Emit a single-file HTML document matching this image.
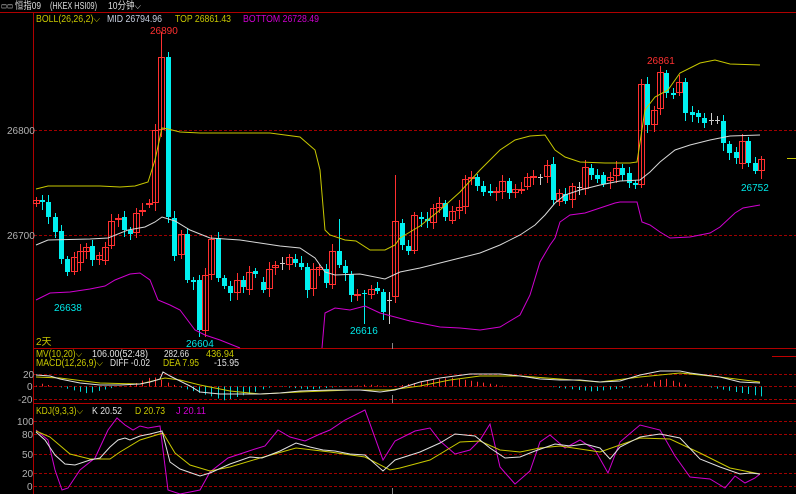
<!DOCTYPE html>
<html><head><meta charset="utf-8"><style>
body{margin:0;background:#000;width:796px;height:494px;overflow:hidden;font-family:"Liberation Sans","Noto Sans CJK SC",sans-serif}
svg{display:block}
text{font-family:"Liberation Sans","Noto Sans CJK SC",sans-serif;font-size:10px}
</style></head><body>
<svg id="s" width="796" height="494" viewBox="0 0 796 494" xmlns="http://www.w3.org/2000/svg">
<rect width="796" height="494" fill="#000"/>
<line x1="0" y1="12.5" x2="796" y2="12.5" stroke="#b00000"/>
<line x1="33.5" y1="13" x2="33.5" y2="494" stroke="#b00000"/>
<line x1="33" y1="348.5" x2="796" y2="348.5" stroke="#b00000"/>
<line x1="33" y1="403.5" x2="796" y2="403.5" stroke="#b00000"/>
<line x1="772" y1="356.5" x2="796" y2="356.5" stroke="#c00000"/>
<line x1="787" y1="158.5" x2="796" y2="158.5" stroke="#c8c800"/>
<line x1="392.5" y1="343" x2="392.5" y2="349" stroke="#888"/>
<line x1="392.5" y1="395" x2="392.5" y2="403" stroke="#888"/>
<line x1="392.5" y1="488" x2="392.5" y2="494" stroke="#888"/>
<g stroke="#a00000" stroke-dasharray="3,2">
<line x1="34" y1="130.5" x2="796" y2="130.5"/><line x1="34" y1="235.5" x2="796" y2="235.5"/>
<line x1="34" y1="374.5" x2="796" y2="374.5"/><line x1="34" y1="386.5" x2="796" y2="386.5"/><line x1="34" y1="399.5" x2="796" y2="399.5"/>
<line x1="34" y1="421.5" x2="796" y2="421.5"/><line x1="34" y1="434.5" x2="796" y2="434.5"/><line x1="34" y1="454.5" x2="796" y2="454.5"/><line x1="34" y1="473.5" x2="796" y2="473.5"/><line x1="34" y1="486.5" x2="796" y2="486.5"/>
</g>
<g id="cand"></g>
<g fill="none" stroke-width="1">
<polyline stroke="#c8c800" points="36,189 48,186 100,186 120,187 135,186 148,182 155,160 162,128 168,129 180,132 200,133 230,133 270,133 300,137 315,150 320,170 325,230 330,235 345,240 356,241 370,250 385,250 395,245 400,238 410,232 420,226 440,210 460,192 480,170 500,150 515,140 530,136 545,135 555,150 565,157 580,162 605,163 630,163 637,162 645,110 655,97 668,90 680,73 700,63 715,60 730,64 760,65"/>
<polyline stroke="#d8d8d8" points="36,245 48,240 90,239 108,238 128,230 145,227 155,222 162,217 175,221 190,230 210,238 240,240 260,243 280,246 300,248 315,258 325,272 335,275 360,274 385,279 400,272 420,268 440,263 460,258 480,253 500,245 520,235 535,225 545,215 555,203 565,195 580,190 600,185 620,181 640,180 650,172 660,162 675,150 690,145 710,140 730,136 760,135"/>
<polyline stroke="#d000d0" points="36,300 50,293 70,292 90,289 105,286 115,280 130,274 140,273 150,280 158,300 170,305 180,310 195,330 205,335 220,340 240,348"/>
<polyline stroke="#d000d0" points="322,348 325,313 335,308 350,310 365,306 380,313 395,317 410,321 420,323 440,327 460,328 480,330 500,327 505,324 520,315 530,295 540,262 550,245 555,238 560,222 570,215 585,213 600,208 615,203 620,202 637,202 642,222 650,225 660,232 670,238 690,237 710,233 720,227 735,213 743,208 760,205"/>
</g>
<g id="hist"></g>
<g fill="none">
<polyline stroke="#c8c800" points="36,377 60,378 100,383 140,384 165,378 180,380 200,385 230,391 260,394 300,392 350,390 390,390 420,386 450,380 480,376 520,376 560,379 600,382 640,377 680,373 720,377 760,382"/>
<polyline stroke="#e0e0e0" points="36,375 50,376 60,379 80,383 100,385 120,385 140,384 150,382 160,379 163,372 170,376 180,381 190,386 200,392 220,394 240,394 260,394 280,393 300,391 330,390 360,390 380,392 395,390 420,382 440,378 470,374 500,374 520,376 540,379 560,380 580,380 600,382 620,381 640,375 660,371 680,371 690,373 720,377 740,382 760,383"/>
<polyline stroke="#d000d0" points="36,430 48,440 55,470 62,490 68,488 80,470 95,458 108,430 117,418 125,425 133,430 140,426 148,428 160,426 168,490 180,494 200,490 210,472 228,458 240,454 255,449 265,446 278,430 290,437 305,441 320,434 330,430 345,420 365,410 383,460 395,441 415,431 430,428 440,441 455,454 470,450 480,440 490,424 500,467 515,484 530,471 540,442 550,435 565,448 580,440 595,450 608,473 620,442 640,425 660,430 675,456 690,477 710,479 725,488 735,476 745,483 755,478 760,474"/>
<polyline stroke="#c8c800" points="36,431 50,437 70,454 90,459 110,459 120,452 140,440 163,433 175,453 190,465 210,471 230,467 260,458 296,448 330,452 365,457 390,470 400,468 430,460 460,442 480,441 500,450 520,452 540,448 560,446 580,449 600,452 620,445 640,438 670,439 700,453 730,468 760,474"/>
<polyline stroke="#e0e0e0" points="36,432 45,440 55,455 65,464 75,465 90,460 100,458 110,447 118,440 125,438 130,440 140,436 150,434 162,431 170,462 180,469 200,476 210,473 230,464 250,457 262,458 280,451 296,443 310,447 323,450 335,451 350,454 365,455 383,471 395,460 420,452 440,443 455,434 475,436 490,448 505,458 520,457 535,451 555,444 570,446 585,444 600,448 610,459 620,447 640,437 660,434 680,438 700,459 720,467 740,474 750,473 760,474"/>
</g>
<text x="1" y="9" fill="#ddd" font-size="8" textLength="12" lengthAdjust="spacingAndGlyphs">▭▭</text>
<text x="15" y="9" fill="#ddd" textLength="26" lengthAdjust="spacingAndGlyphs">恒指09</text>
<text x="50" y="9" fill="#ddd" font-size="9" textLength="47" lengthAdjust="spacingAndGlyphs">(HKEX HSI09)</text>
<text x="108" y="9" fill="#ddd" textLength="33" lengthAdjust="spacingAndGlyphs">10分钟⌵</text>
<text x="36" y="22" fill="#c8c800" textLength="64" lengthAdjust="spacingAndGlyphs">BOLL(26,26,2)⌵</text>
<text x="107" y="22" fill="#c8d0e0" textLength="55" lengthAdjust="spacingAndGlyphs">MID 26794.96</text>
<text x="175" y="22" fill="#c8c800" textLength="56" lengthAdjust="spacingAndGlyphs">TOP 26861.43</text>
<text x="243" y="22" fill="#d000d0" textLength="76" lengthAdjust="spacingAndGlyphs">BOTTOM 26728.49</text>
<text x="150" y="34" fill="#ff3030">26890</text>
<text x="7" y="134" fill="#b0b0b0">26800</text>
<text x="7" y="239" fill="#b0b0b0">26700</text>
<text x="54" y="311" fill="#00e8e8">26638</text>
<text x="186" y="347" fill="#00e8e8">26604</text>
<text x="350" y="334" fill="#00e8e8">26616</text>
<text x="647" y="64" fill="#ff3030">26861</text>
<text x="741" y="191" fill="#00e8e8">26752</text>
<text x="36" y="345" fill="#c8c800">2天</text>
<text x="36" y="357" fill="#c8c800" textLength="46" lengthAdjust="spacingAndGlyphs">MV(10,20)⌵</text>
<text x="92" y="357" fill="#e0e0e0" textLength="56" lengthAdjust="spacingAndGlyphs">106.00(52:48)</text>
<text x="164" y="357" fill="#e0e0e0" textLength="25" lengthAdjust="spacingAndGlyphs">282.66</text>
<text x="206" y="357" fill="#c8c800" textLength="28" lengthAdjust="spacingAndGlyphs">436.94</text>
<text x="36" y="366" fill="#c8c800" textLength="67" lengthAdjust="spacingAndGlyphs">MACD(12,26,9)⌵</text>
<text x="110" y="366" fill="#e0e0e0" textLength="40" lengthAdjust="spacingAndGlyphs">DIFF -0.02</text>
<text x="163" y="366" fill="#c8c800" textLength="36" lengthAdjust="spacingAndGlyphs">DEA 7.95</text>
<text x="214" y="366" fill="#e0e0e0" textLength="25" lengthAdjust="spacingAndGlyphs">-15.95</text>
<text x="23" y="378" fill="#b0b0b0">20</text>
<text x="27" y="390" fill="#b0b0b0">0</text>
<text x="18" y="403" fill="#b0b0b0">-20</text>
<text x="36" y="414" fill="#c8c800" textLength="47" lengthAdjust="spacingAndGlyphs">KDJ(9,3,3)⌵</text>
<text x="92" y="414" fill="#e0e0e0" textLength="30" lengthAdjust="spacingAndGlyphs">K 20.52</text>
<text x="135" y="414" fill="#c8c800" textLength="30" lengthAdjust="spacingAndGlyphs">D 20.73</text>
<text x="176" y="414" fill="#d000d0" textLength="30" lengthAdjust="spacingAndGlyphs">J 20.11</text>
<text x="17" y="425" fill="#b0b0b0">100</text>
<text x="22" y="438" fill="#b0b0b0">80</text>
<text x="22" y="458" fill="#b0b0b0">50</text>
<text x="22" y="477" fill="#b0b0b0">20</text>
<text x="27" y="490" fill="#b0b0b0">0</text>
</svg>
<script>
var C=[[36,200,204,'r'],[42,200,202,'c'],[48,202,217,'c'],[55,217,232,'c'],[61,231,259,'c'],[67,259,272,'c'],[74,257,272,'r'],[80,251,263,'r'],[86,247,252,'r'],[92,246,260,'c'],[99,255,260,'r'],[105,247,261,'r'],[111,221,246,'r'],[118,218,219,'r'],[124,217,230,'c'],[130,230,234,'c'],[136,213,233,'r'],[142,210,212,'r'],[149,203,205,'r'],[155,130,203,'r'],[161,57,130,'r',32],[168,57,217,'c'],[174,218,256,'c'],[181,234,255,'r'],[187,234,280,'c'],[193,280,282,'c'],[199,280,330,'c'],[205,275,331,'r'],[211,239,275,'r'],[218,238,278,'c'],[224,278,286,'c'],[230,286,293,'c'],[237,280,293,'r'],[243,280,287,'c'],[249,272,290,'r'],[255,271,274,'c'],[263,282,290,'c'],[269,269,289,'r'],[275,265,268,'r'],[282,263,264,'g'],[289,257,265,'r'],[295,259,263,'c'],[301,263,267,'c'],[307,267,290,'c'],[313,269,289,'r'],[319,267,270,'r'],[326,269,283,'c'],[332,251,285,'r'],[339,251,265,'c',219],[345,266,273,'c'],[351,274,295,'c'],[357,294,295,'r'],[364,293,294,'c',290,324],[371,289,295,'r'],[377,288,291,'c'],[383,292,312,'c'],[389,300,301,'g',292,324],[395,221,297,'r',175],[402,223,245,'c'],[408,246,251,'c'],[414,215,251,'r'],[421,217,219,'c'],[427,219,221,'c'],[433,208,223,'r'],[439,203,208,'r'],[445,203,217,'c'],[452,211,221,'r'],[459,207,211,'r'],[465,179,207,'r'],[471,177,179,'r'],[477,177,186,'c'],[483,186,192,'c'],[490,191,193,'c'],[496,191,193,'r'],[502,181,192,'r'],[509,181,193,'c'],[515,189,193,'r'],[521,189,190,'r'],[527,177,187,'r'],[533,176,177,'r'],[540,177,178,'g'],[547,165,177,'r'],[553,164,200,'c'],[559,193,202,'r'],[565,194,201,'c'],[572,186,200,'r'],[579,187,188,'g'],[585,167,189,'r'],[591,168,175,'c'],[597,175,179,'c'],[603,175,184,'c'],[610,177,181,'r'],[616,168,176,'r'],[622,168,175,'c'],[629,173,183,'c'],[635,183,185,'c'],[641,84,185,'r'],[647,84,125,'c'],[654,110,125,'r'],[660,72,109,'r',66],[666,73,93,'c'],[673,93,95,'c'],[679,82,93,'r'],[685,82,113,'c'],[692,112,115,'c'],[698,113,117,'c'],[704,118,123,'c'],[711,120,121,'g'],[717,120,121,'g'],[723,121,143,'c'],[729,144,153,'c'],[736,152,158,'c'],[742,141,164,'r'],[748,141,163,'c'],[755,163,171,'c'],[761,159,171,'r']];
var ns="http://www.w3.org/2000/svg",g=document.getElementById('cand'),h=document.getElementById('hist');
function el(p,t,a){var e=document.createElementNS(ns,t);for(var k in a)e.setAttribute(k,a[k]);p.appendChild(e);return e;}
C.forEach(function(c,i){var x=c[0],t=c[1],b=c[2],col=c[3]=='r'?'#ff3030':c[3]=='c'?'#00f0f0':'#ccc';
var wt=c[4]||t-3-(i*7%5),wb=c[5]||b+3+(i*5%6);
el(g,'line',{x1:x+.5,y1:wt,x2:x+.5,y2:wb,stroke:col});
if(c[3]=='r')el(g,'rect',{x:x-2.5,y:t+.5,width:6,height:Math.max(b-t-1,1),fill:'none',stroke:col});
else el(g,'rect',{x:x-2,y:t,width:5,height:Math.max(b-t,1),fill:col});});
var H=[[36,50,-3],[60,115,7],[130,175,-10],[180,270,14],[280,340,3],[345,390,-2],[395,505,-9],[550,635,5],[640,690,-8],[705,762,10]];
C.forEach(function(c){var x=c[0];H.forEach(function(r){if(x>=r[0]&&x<=r[1]){var m=(r[0]+r[1])/2,f=1-Math.abs(x-m)/((r[1]-r[0])/2+3);if(r==H[9])f=(x-r[0])/(r[1]-r[0]);var v=r[2]*f;el(h,'line',{x1:x+.5,y1:386.5,x2:x+.5,y2:386.5+v,stroke:v<0?'#ff3030':'#00d8d8'});}});});
</script>
</body></html>
